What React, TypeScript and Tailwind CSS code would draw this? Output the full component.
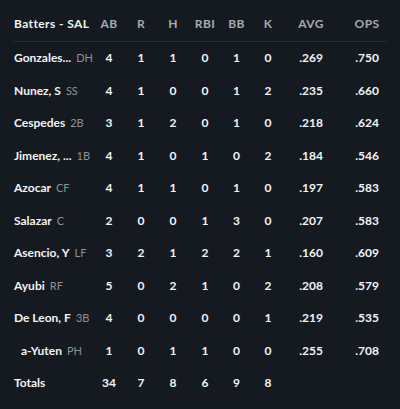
import React from 'react';

type Row = {
  name: string;
  pos: string;
  sub?: boolean;
  stats: (string | number)[];
};

const rows: Row[] = [
  { name: 'Gonzales...', pos: 'DH', stats: [4, 1, 1, 0, 1, 0, '.269', '.750'] },
  { name: 'Nunez, S', pos: 'SS', stats: [4, 1, 0, 0, 1, 2, '.235', '.660'] },
  { name: 'Cespedes', pos: '2B', stats: [3, 1, 2, 0, 1, 0, '.218', '.624'] },
  { name: 'Jimenez, ...', pos: '1B', stats: [4, 1, 0, 1, 0, 2, '.184', '.546'] },
  { name: 'Azocar', pos: 'CF', stats: [4, 1, 1, 0, 1, 0, '.197', '.583'] },
  { name: 'Salazar', pos: 'C', stats: [2, 0, 0, 1, 3, 0, '.207', '.583'] },
  { name: 'Asencio, Y', pos: 'LF', stats: [3, 2, 1, 2, 2, 1, '.160', '.609'] },
  { name: 'Ayubi', pos: 'RF', stats: [5, 0, 2, 1, 0, 2, '.208', '.579'] },
  { name: 'De Leon, F', pos: '3B', stats: [4, 0, 0, 0, 0, 1, '.219', '.535'] },
  { name: 'a-Yuten', pos: 'PH', sub: true, stats: [1, 0, 1, 1, 0, 0, '.255', '.708'] },
];

const headers = ['AB', 'R', 'H', 'RBI', 'BB', 'K', 'AVG', 'OPS'];
const totals = [34, 7, 8, 6, 9, 8, '', ''];

const grid = 'grid grid-cols-[79px_32px_32px_32px_32px_31px_32px_54px_58px] items-center';

export default function App() {
  return (
    <div className="w-[400px] h-[409px] bg-[#151a21] px-[14px] pt-[15px] font-['Lato',sans-serif] text-[12px] font-bold text-[#f2f3f4]">
      {/* Header */}
      <div className={`${grid} h-[18px] border-b border-[#2a2f37] box-content pb-[8px] tracking-[0.4px]`}>
        <div className="text-[#f2f3f4] whitespace-nowrap">Batters - SAL</div>
        {headers.map(h => (
          <div key={h} className="text-center text-[#a7aaaf]">{h}</div>
        ))}
      </div>

      {/* Players */}
      {rows.map((r, i) => (
        <div key={i} className={`${grid} h-[32.5px]`}>
          <div className={`whitespace-nowrap ${r.sub ? 'pl-[7px]' : ''}`}>
            {r.name}
            <span className="ml-[5px] text-[11px] font-normal text-[#8e9196]">{r.pos}</span>
          </div>
          {r.stats.map((s, j) => (
            <div key={j} className="text-center">{s}</div>
          ))}
        </div>
      ))}

      {/* Totals */}
      <div className={`${grid} h-[32.5px]`}>
        <div>Totals</div>
        {totals.map((s, j) => (
          <div key={j} className="text-center">{s}</div>
        ))}
      </div>
    </div>
  );
}
